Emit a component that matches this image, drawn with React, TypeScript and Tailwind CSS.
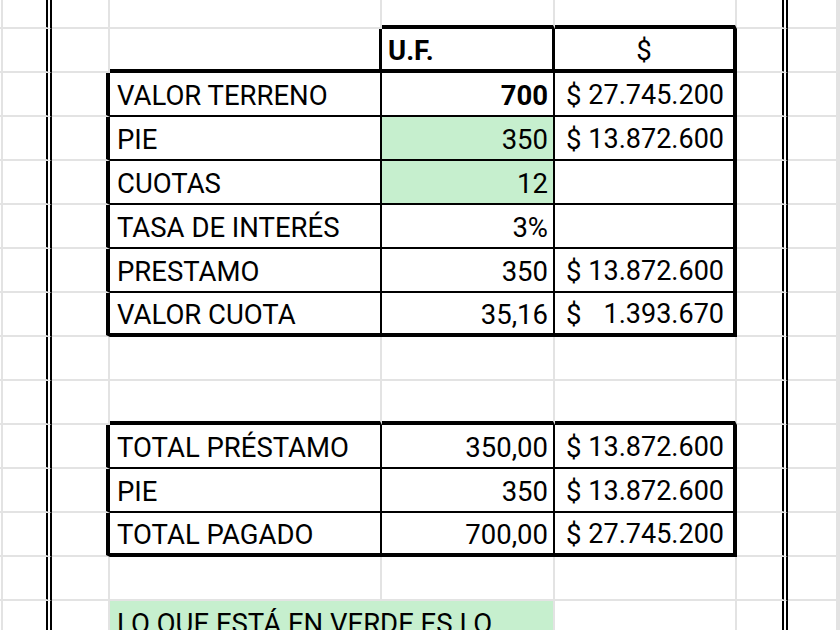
import type { ReactNode } from 'react';

type Region = 'h' | 'd' | 't' | null;

const COLS = 9;
const ROWS = 15;

const regionOf = (r: number, c: number): Region => {
    if (r === 1 && (c === 4 || c === 5)) return 'h';
    if (r >= 2 && r <= 7 && c >= 3 && c <= 5) return 'd';
    if (r >= 10 && r <= 12 && c >= 3 && c <= 5) return 't';
    return null;
};

// borde derecho de la celda (línea entre c y c+1)
const rightEdge = (r: number, c: number) => {
    if (c === 1 || c === 6) return 'border-r-[6px] border-r-black [border-right-style:double]';
    const a = regionOf(r, c);
    const b = regionOf(r, c + 1);
    if (a && a === b) return a === 'h' ? 'border-r-[3px] border-r-black' : 'border-r-2 border-r-black';
    if (!a && b === 'h') return 'border-r-[3px] border-r-black';
    if (a || b) return 'border-r-4 border-r-black';
    return 'border-r-2 border-r-[#e3e3e3]';
};

const bottomEdge = (r: number, c: number) => {
    const a = regionOf(r, c);
    const b = regionOf(r + 1, c);
    if (a && a === b) return 'border-b-2 border-b-black';
    if (a || b) return 'border-b-4 border-b-black';
    return 'border-b-2 border-b-[#e3e3e3]';
};

const Money = ({ value }: { value: string }) => (
    <div className="flex w-full justify-between pl-[11px] pr-[9px]">
        <span>$</span>
        <span className="text-[27px]">{value}</span>
    </div>
);

const label = (text: string) => <span className="pl-[7px]">{text}</span>;
const num = (text: string, bold = false) => (
    <span className={bold ? 'ml-auto pr-[5px] font-bold' : 'ml-auto pr-[5px]'}>{text}</span>
);

const content: Record<string, ReactNode> = {
    '1-4': <span className="pl-[6px] font-bold">U.F.</span>,
    '1-5': <span className="mx-auto">$</span>,
    '2-3': label('VALOR TERRENO'),
    '2-4': num('700', true),
    '2-5': <Money value="27.745.200" />,
    '3-3': label('PIE'),
    '3-4': num('350'),
    '3-5': <Money value="13.872.600" />,
    '4-3': label('CUOTAS'),
    '4-4': num('12'),
    '5-3': label('TASA DE INTERÉS'),
    '5-4': num('3%'),
    '6-3': label('PRESTAMO'),
    '6-4': num('350'),
    '6-5': <Money value="13.872.600" />,
    '7-3': label('VALOR CUOTA'),
    '7-4': num('35,16'),
    '7-5': <Money value="1.393.670" />,
    '10-3': label('TOTAL PRÉSTAMO'),
    '10-4': num('350,00'),
    '10-5': <Money value="13.872.600" />,
    '11-3': label('PIE'),
    '11-4': num('350'),
    '11-5': <Money value="13.872.600" />,
    '12-3': label('TOTAL PAGADO'),
    '12-4': num('700,00'),
    '12-5': <Money value="27.745.200" />,
};

const green = new Set(['3-4', '4-4']);

export default function App() {
    const cells: ReactNode[] = [];
    for (let r = 0; r < ROWS; r++) {
        const h = r === 0 ? 'h-[29px]' : 'h-[44px]';
        for (let c = 0; c < COLS; c++) {
            const key = `${r}-${c}`;
            if (r === 14 && c === 4) continue;
            if (r === 14 && c === 3) {
                cells.push(
                    <div
                        key={key}
                        className={`col-span-2 flex items-center pt-[4px] bg-[#c6efce] ${h} ${rightEdge(r, 4)} ${bottomEdge(r, 3)}`}
                    >
                        {label('LO QUE ESTÁ EN VERDE ES LO')}
                    </div>
                );
                continue;
            }
            const bg = green.has(key) ? 'bg-[#c6efce]' : 'bg-white';
            cells.push(
                <div
                    key={key}
                    className={`flex items-center pt-[4px] whitespace-nowrap ${bg} ${h} ${rightEdge(r, c)} ${bottomEdge(r, c)}`}
                >
                    {content[key]}
                </div>
            );
        }
    }

    return (
        <div className="h-[630px] w-[840px] overflow-hidden bg-white font-['Roboto',sans-serif] text-[27.5px] leading-none text-black">
            <div className="grid grid-cols-[3px_49px_58px_272px_173px_182px_51px_50px_2px]">{cells}</div>
        </div>
    );
}
